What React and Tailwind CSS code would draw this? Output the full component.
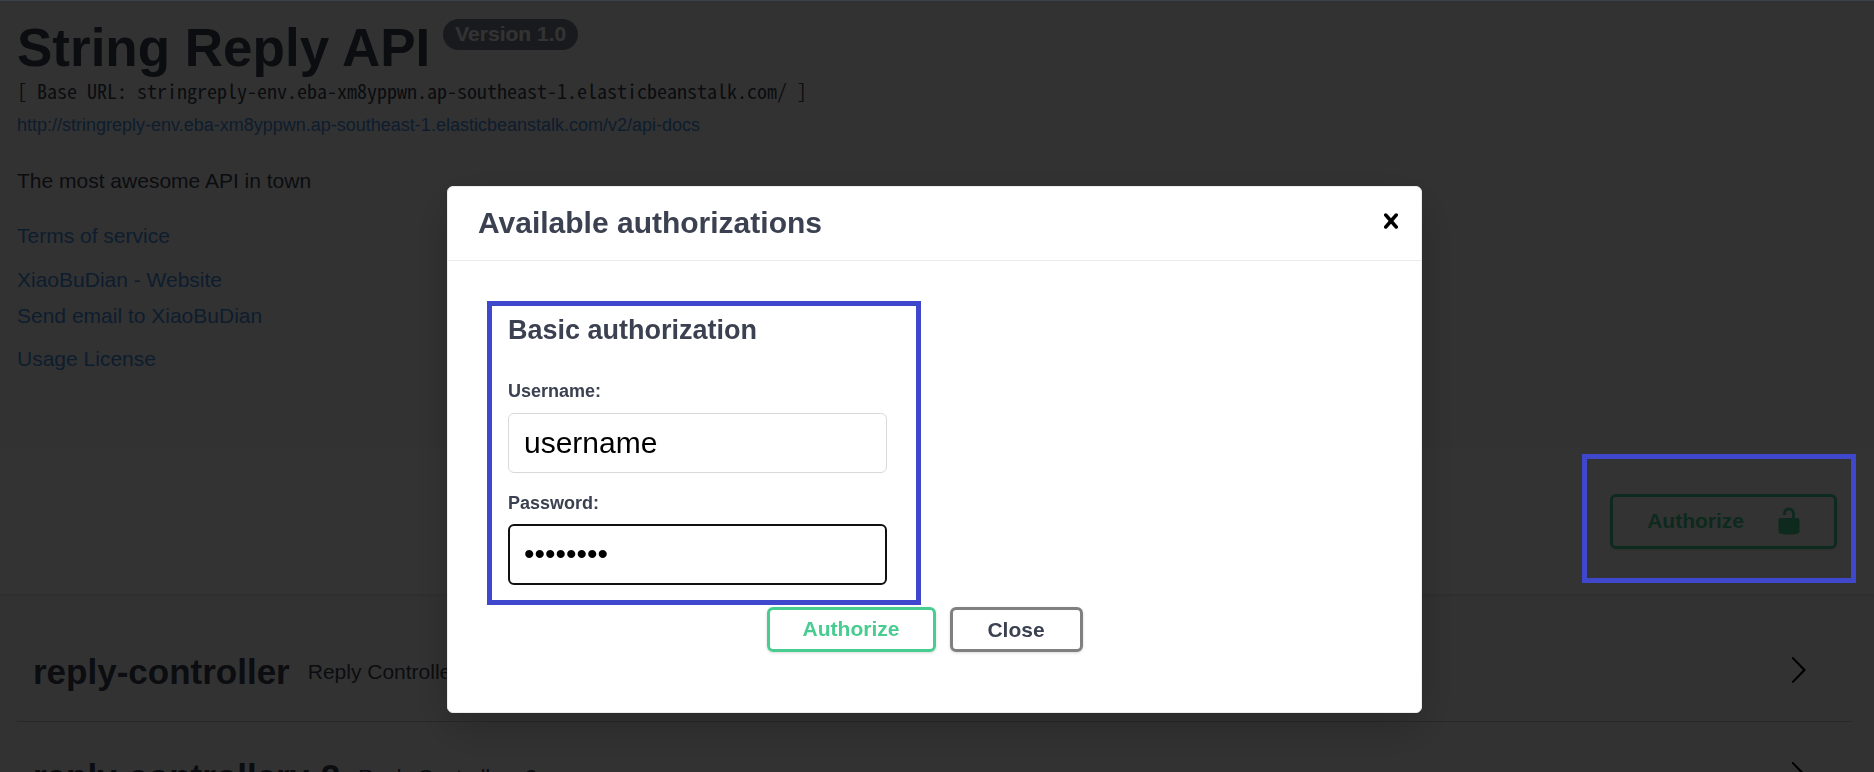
const links = [
  { text: 'Terms of service', gap: 'mt-[25px]' },
  { text: 'XiaoBuDian - Website', gap: 'mt-[14px]' },
  { text: 'Send email to XiaoBuDian', gap: 'mt-[6px]' },
  { text: 'Usage License', gap: 'mt-[13px]' },
];

const tags = [
  { name: 'reply-controller', description: 'Reply Controller' },
  { name: 'reply-controllerv-2', description: 'Reply Controllerv 2' },
];

function Icon({ d, className }) {
  return (
    <svg viewBox="0 0 20 20" fill="currentColor" aria-hidden="true" className={className}>
      <path d={d} />
    </svg>
  );
}

const UNLOCKED =
  'M15.8 8H14V5.6C14 2.703 12.665 1 10 1 7.334 1 6 2.703 6 5.6V6h2v-.801C8 3.754 8.797 3 10 3c1.203 0 2 .754 2 2.199V8H4c-.553 0-1 .646-1 1.199V17c0 .549.428 1.139.951 1.307l1.197.387C5.672 18.861 6.55 19 7.1 19h5.8c.549 0 1.428-.139 1.951-.307l1.196-.387c.524-.167.953-.757.953-1.306V9.199C17 8.646 16.352 8 15.8 8z';
const CROSS =
  'M14.348 14.849c-.469.469-1.229.469-1.697 0L10 11.819l-2.651 3.029c-.469.469-1.229.469-1.697 0-.469-.469-.469-1.229 0-1.697l2.758-3.15-2.759-3.152c-.469-.469-.469-1.228 0-1.697.469-.469 1.228-.469 1.697 0L10 8.183l2.651-3.031c.469-.469 1.228-.469 1.697 0 .469.469.469 1.229 0 1.697l-2.758 3.152 2.758 3.15c.469.469.469 1.229 0 1.698z';
const ARROW =
  'M13.25 10L6.109 2.58c-.268-.27-.268-.707 0-.979.268-.27.701-.27.969 0l7.83 7.908c.268.271.268.709 0 .979l-7.83 7.908c-.268.271-.701.27-.969 0-.268-.269-.268-.707 0-.979L13.25 10z';

function ApiInfo() {
  return (
    <header className="flex flex-col items-start pt-[18px] pr-[22px] pb-[74px] pl-[17px]">
      <h1 className="flex items-start text-[53px] leading-[60px] font-bold">
        String Reply API
        <span className="ml-[13px] mt-px rounded-full bg-[#7d8492] px-[12px] pb-[2px] text-[21px] leading-[29px] text-white">
          Version 1.0
        </span>
      </h1>
      <p className="font-['Noto_Sans_Mono_CJK_SC','Liberation_Mono',monospace] text-[20px] leading-[26px]">
        [ Base URL: stringreply-env.eba-xm8yppwn.ap-southeast-1.elasticbeanstalk.com/ ]
      </p>
      <a href="#docs" className="mt-[7px] text-[18px] leading-[28px] text-[#4990e2]">
        http://stringreply-env.eba-xm8yppwn.ap-southeast-1.elasticbeanstalk.com/v2/api-docs
      </a>
      <p className="mt-[27px] text-[21px] leading-[30px]">The most awesome API in town</p>
      {links.map((link) => (
        <a
          key={link.text}
          href="#info"
          className={`${link.gap} text-[21px] leading-[30px] text-[#4990e2]`}
        >
          {link.text}
        </a>
      ))}
    </header>
  );
}

function SchemeBar() {
  return (
    <section className="flex justify-end bg-white pt-[46px] pr-[37px] pb-[45px] shadow-[0_1px_3px_rgba(0,0,0,0.15)]">
      <div className="relative">
        <button
          type="button"
          className="flex h-[55px] items-center rounded-md border-[3px] border-[#49cc90] pr-[30px] pb-[2px] pl-[34px] text-[21px] font-bold text-[#49cc90] shadow-[0_1px_3px_rgba(0,0,0,0.1)]"
        >
          <span className="pr-[30px] leading-[24px]">Authorize</span>
          <Icon d={UNLOCKED} className="size-[30px]" />
        </button>
        <div className="pointer-events-none absolute -top-[40px] -right-[19px] -bottom-[34px] -left-[28px] z-20 border-[5px] border-[#3f48cc]" />
      </div>
    </section>
  );
}

function TagList() {
  return (
    <main className="mt-[23px] pr-[22px] pl-[17px]">
      {tags.map((tag) => (
        <section
          key={tag.name}
          className="flex h-[105px] items-center justify-between border-b border-[#c4c6ca] pr-[39px] pl-[16px]"
        >
          <div className="flex items-center pt-[6px]">
            <h2 className="text-[35px] leading-[42px] font-bold">{tag.name}</h2>
            <p className="pl-[18px] text-[21px] leading-[30px]">{tag.description}</p>
          </div>
          <button type="button" aria-label="Expand operations" className="pt-[2px] text-black">
            <Icon d={ARROW} className="size-[30px]" />
          </button>
        </section>
      ))}
    </main>
  );
}

function AuthModal() {
  return (
    <div className="fixed inset-0 z-10 flex items-start justify-center border-t border-[#3a424e] bg-black/80 pt-[185px] pr-[5px]">
      <div
        role="dialog"
        aria-labelledby="auth-title"
        className="w-full max-w-[975px] rounded-md border border-[#ebebeb] bg-white shadow-[0_15px_45px_rgba(0,0,0,0.2)]"
      >
        <div className="flex items-center justify-between border-b border-[#ebebeb] pt-[17px] pr-[15px] pb-[19px] pl-[30px]">
          <h3 id="auth-title" className="text-[30px] leading-[37px] font-bold">
            Available authorizations
          </h3>
          <button type="button" aria-label="Close dialog" className="pb-[4px] text-black">
            <Icon d={CROSS} className="size-[30px]" />
          </button>
        </div>
        <form className="pt-[40px] pb-[60px] pl-[39px]" onSubmit={(e) => e.preventDefault()}>
          <div className="flex max-w-[434px] flex-col border-[5px] border-[#3f48cc] pt-[8px] pr-[29px] pb-[15px] pl-[16px]">
            <h4 className="text-[27px] leading-[32px] font-bold">Basic authorization</h4>
            <label htmlFor="user" className="mt-[33px] text-[18px] leading-[24px] font-bold">
              Username:
            </label>
            <input
              id="user"
              type="text"
              defaultValue="username"
              className="mt-[10px] h-[60px] rounded-md border border-[#d9d9d9] bg-white px-[15px] text-[30px] text-black"
            />
            <label htmlFor="pass" className="mt-[18px] text-[18px] leading-[24px] font-bold">
              Password:
            </label>
            <input
              id="pass"
              type="password"
              defaultValue="password"
              className="mt-[9px] h-[61px] rounded-md border-2 border-[#101010] bg-white px-[14px] pb-[2px] text-[30px] text-black"
            />
          </div>
          <div className="mt-[2px] flex justify-center gap-[14px] pr-[59px]">
            <button
              type="submit"
              className="h-[45px] w-[169px] rounded-md border-[3px] border-[#49cc90] pb-[2px] text-[21px] leading-[24px] font-bold text-[#49cc90] shadow-[0_1px_3px_rgba(0,0,0,0.15)]"
            >
              Authorize
            </button>
            <button
              type="button"
              className="h-[45px] w-[133px] rounded-md border-[3px] border-[#808080] text-[21px] leading-[24px] font-bold shadow-[0_1px_3px_rgba(0,0,0,0.15)]"
            >
              Close
            </button>
          </div>
        </form>
      </div>
    </div>
  );
}

export default function App() {
  return (
    <div className="h-screen overflow-hidden bg-[#fafafa] font-['Liberation_Sans',Arial,sans-serif] text-[#3b4151]">
      <ApiInfo />
      <SchemeBar />
      <TagList />
      <AuthModal />
    </div>
  );
}
